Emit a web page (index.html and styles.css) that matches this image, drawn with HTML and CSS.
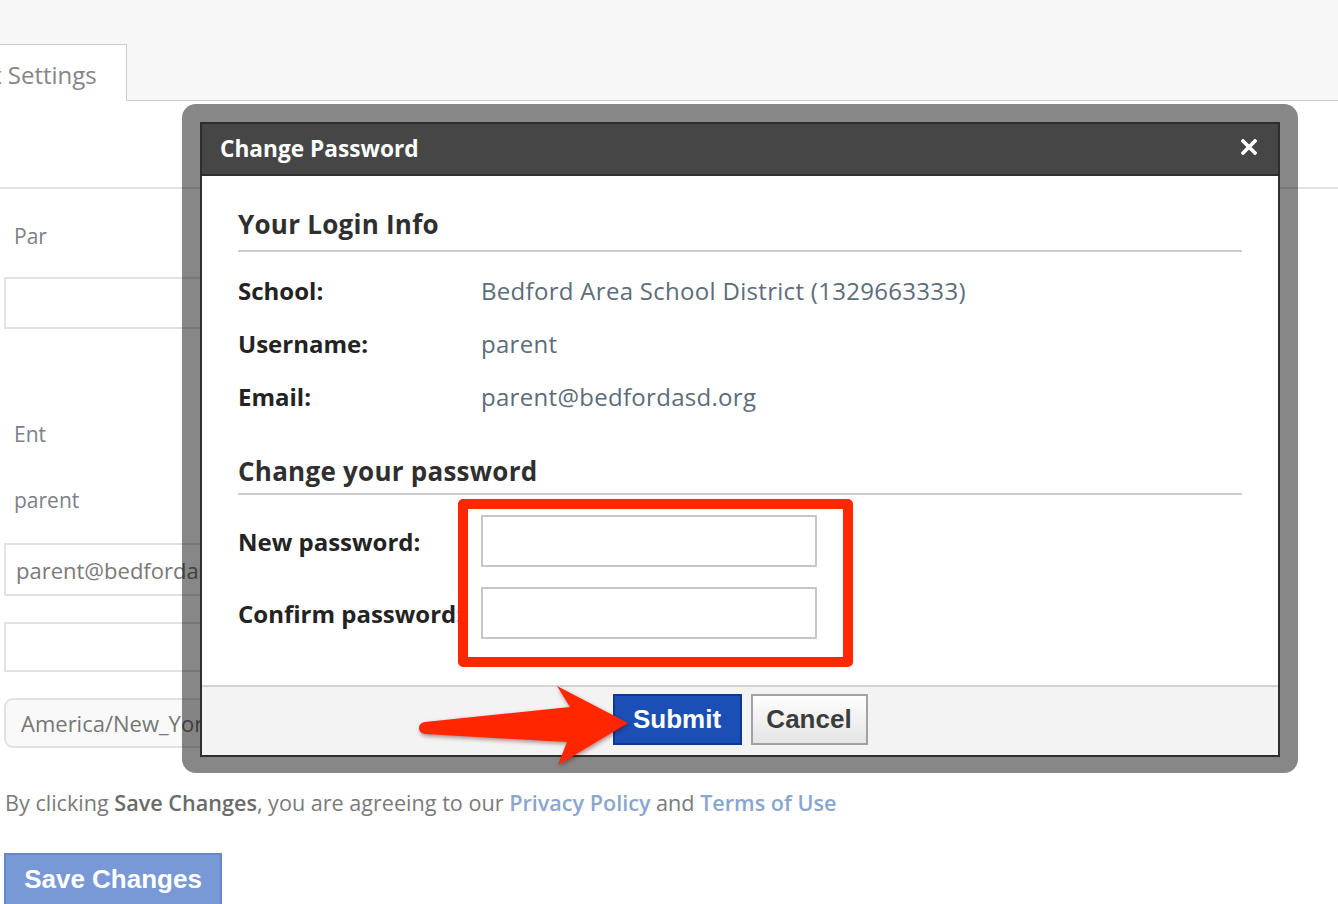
FILE: index.html
```html
<!DOCTYPE html>
<html>
<head>
<meta charset="utf-8">
<link rel="stylesheet" href="styles.css">
</head>
<body>
<div class="page">
  <div class="topbar">
    <div class="tab"><span class="tab-text">t Settings</span></div>
  </div>
  <div class="subhead"></div>
  <div class="form">
    <div class="flabel lbl-par">Par</div>
    <div class="finput finput-first"></div>
    <div class="flabel lbl-ent">Ent</div>
    <div class="flabel lbl-user">parent</div>
    <div class="finput finput-email">parent@bedfordasd.org</div>
    <div class="finput finput-empty"></div>
    <div class="fselect">America/New_York</div>
    <p class="agree">By clicking <b>Save Changes</b>, you are agreeing to our <a class="lnk">Privacy Policy</a> and <a class="lnk">Terms of Use</a></p>
    <button class="save-btn">Save Changes</button>
  </div>
</div>

<div class="modal-frame">
  <div class="dialog">
    <div class="dialog-title">
      <span>Change Password</span>
      <svg class="close-x" width="16" height="16" viewBox="0 0 16 16"><path d="M2 2 L14 14 M14 2 L2 14" stroke="#fff" stroke-width="3.6" stroke-linecap="square"/></svg>
    </div>
    <div class="dialog-body">
      <h2 class="sec-h sec-first">Your Login Info</h2>
      <div class="info-rows">
        <div class="info-row"><span class="ilabel">School:</span><span class="ival">Bedford Area School District (1329663333)</span></div>
        <div class="info-row"><span class="ilabel">Username:</span><span class="ival">parent</span></div>
        <div class="info-row"><span class="ilabel">Email:</span><span class="ival">parent@bedfordasd.org</span></div>
      </div>
      <h2 class="sec-h sec-second">Change your password</h2>
      <div class="pw-rows">
        <div class="pw-row"><span class="ilabel">New password:</span><div class="pw-input"></div></div>
        <div class="pw-row"><span class="ilabel">Confirm password:</span><div class="pw-input"></div></div>
      </div>
    </div>
    <div class="dialog-foot">
      <button class="btn-submit">Submit</button>
      <button class="btn-cancel">Cancel</button>
    </div>
  </div>
</div>

<div class="highlight"></div>
<svg class="arrow" width="1338" height="904" viewBox="0 0 1338 904">
  <path d="M419,728 Q419,723 425,722 L570,707 L557,686 L628,723 L558,765 L567,742 L425,734 Q419,733 419,728 Z" fill="#ff2600"/>
</svg>
</body>
</html>
```
FILE: styles.css
```css
html, body {
  margin: 0;
  padding: 0;
  background: #fff;
  font-family: "Open Sans", "Liberation Sans", sans-serif;
  overflow: hidden;
}
.page {
  width: 1338px;
  height: 904px;
  overflow: hidden;
}
.topbar {
  height: 100px;
  background: #f7f7f7;
  border-bottom: 1px solid #cbcbcb;
  display: flex;
  align-items: flex-end;
}
.tab {
  height: 54px;
  margin-bottom: -1px;
  background: #fff;
  border-top: 1px solid #cbcbcb;
  border-right: 1px solid #cbcbcb;
  box-sizing: content-box;
  width: 126px;
  overflow: hidden;
  display: flex;
  align-items: center;
  padding-top: 2px;
}
.tab-text {
  margin-left: -7px;
  font-size: 24px;
  color: #858585;
  white-space: nowrap;
}
.subhead {
  height: 86px;
  border-bottom: 2px solid #e2e2e2;
}
.form {
  padding-left: 4px;
}
.flabel {
  font-size: 21px;
  line-height: 28px;
  color: #7b818a;
  padding-left: 10px;
}
.lbl-par { margin-top: 33px; }
.lbl-ent { margin-top: 91px; }
.lbl-user { margin-top: 38px; }
.finput {
  width: 900px;
  box-sizing: border-box;
  border: 2px solid #e2e2e2;
  font-size: 22px;
  color: #7a7a7a;
  padding-left: 10px;
  display: flex;
  align-items: center;
}
.finput-first { margin-top: 27px; height: 52px; }
.finput-email { margin-top: 29px; height: 53px; }
.finput-empty { margin-top: 26px; height: 50px; }
.fselect {
  margin-top: 26px;
  width: 900px;
  height: 50px;
  box-sizing: border-box;
  border: 2px solid #e2e2e2;
  border-radius: 9px;
  background: #f9f9f9;
  font-size: 22px;
  color: #767676;
  padding-left: 15px;
  display: flex;
  align-items: center;
}
.agree {
  margin: 41px 0 0 1px;
  font-size: 21.6px;
  line-height: 28px;
  color: #7a7a7a;
  white-space: nowrap;
}
.agree b { font-weight: 600; color: #6a6a6a; }
.lnk { color: #8aa6cf; font-weight: 600; }
.save-btn {
  margin-top: 36px;
  width: 218px;
  height: 56px;
  box-sizing: border-box;
  background: #7899d5;
  border: 2px solid #6687c8;
  color: #fff;
  font-family: "Liberation Sans", Arial, sans-serif;
  font-weight: 700;
  font-size: 26px;
  padding: 0 0 4px 0;
  display: block;
}

/* modal */
.modal-frame {
  position: absolute;
  left: 182px;
  top: 104px;
  width: 1116px;
  height: 669px;
  box-sizing: border-box;
  padding: 18px 18px 16px 18px;
  background: rgba(0, 0, 0, 0.47);
  border-radius: 14px;
}
.dialog {
  height: 100%;
  box-sizing: border-box;
  border: 2px solid #2e2e2e;
  background: #fff;
  display: flex;
  flex-direction: column;
}
.dialog-title {
  height: 52px;
  box-sizing: border-box;
  background: #464646;
  border-bottom: 2px solid #2e2e2e;
  display: flex;
  align-items: center;
  justify-content: space-between;
  padding: 0 21px 2px 18px;
  color: #fff;
  font-weight: 700;
  font-size: 22.7px;
}
.close-x { display: block; margin-top: -2px; }
.dialog-body {
  flex: 1;
  padding: 32px 36px 0 36px;
}
.sec-h {
  margin: 0;
  font-size: 26px;
  line-height: 32px;
  font-weight: 700;
  color: #2f2f2f;
  border-bottom: 2px solid #cccccc;
  letter-spacing: 0.25px;
}
.sec-first { padding-bottom: 10px; }
.sec-second { margin-top: 43px; padding-bottom: 6px; }
.info-rows {
  margin-top: 24px;
  display: flex;
  flex-direction: column;
  gap: 23px;
}
.info-row {
  display: grid;
  grid-template-columns: 243px 1fr;
  line-height: 30px;
  font-size: 24px;
}
.ilabel {
  font-weight: 700;
  color: #232323;
  font-size: 24px;
  white-space: nowrap;
}
.ival { color: #5d6c7b; letter-spacing: 0.3px; }
.pw-rows {
  margin-top: 20px;
  display: flex;
  flex-direction: column;
  gap: 20px;
}
.pw-row {
  display: grid;
  grid-template-columns: 243px 336px;
  align-items: center;
}
.pw-input {
  height: 52px;
  box-sizing: border-box;
  border: 2px solid #c6c6c6;
  background: #fff;
}
.dialog-foot {
  height: 70px;
  box-sizing: border-box;
  border-top: 2px solid #d3d3d3;
  background: #f3f3f3;
  display: flex;
  justify-content: center;
  align-items: flex-start;
  gap: 9px;
  padding-top: 7px;
}
.btn-submit, .btn-cancel {
  height: 51px;
  box-sizing: border-box;
  font-family: "Liberation Sans", Arial, sans-serif;
  font-weight: 700;
  font-size: 26px;
  padding: 0;
}
.btn-submit {
  width: 129px;
  background: #1b4fb6;
  border: 2px solid #0f3a8c;
  color: #fff;
}
.btn-cancel {
  width: 117px;
  background: linear-gradient(#fefefe, #e4e4e4);
  border: 2px solid #a2a2a2;
  color: #3c3c3c;
}

/* annotations */
.highlight {
  position: absolute;
  left: 458px;
  top: 499px;
  width: 395px;
  height: 168px;
  box-sizing: border-box;
  border: 10px solid #ff2600;
  border-radius: 5px;
}
.arrow {
  position: absolute;
  left: 0;
  top: 0;
  filter: drop-shadow(1px 2px 2px rgba(90, 0, 0, 0.45));
  pointer-events: none;
}
```
